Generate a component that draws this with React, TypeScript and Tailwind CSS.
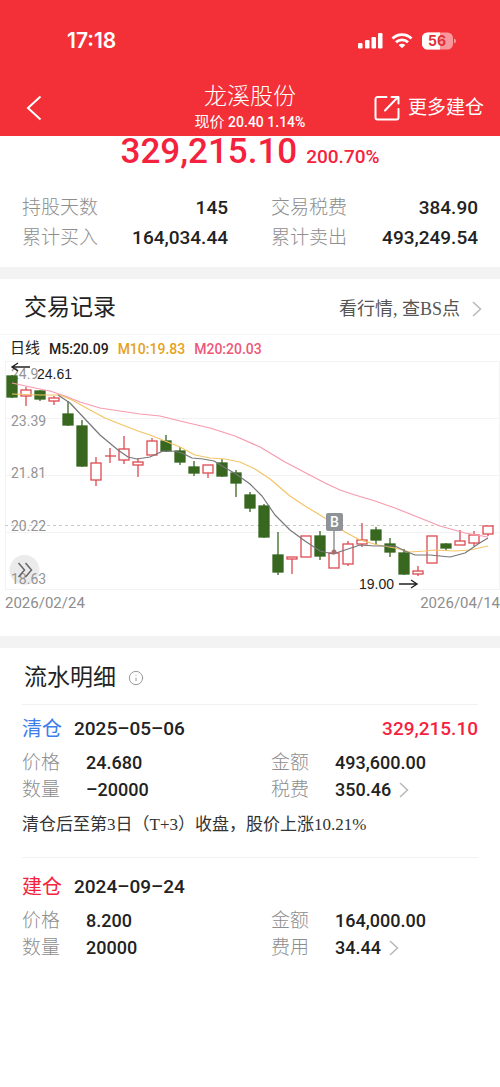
import { Info } from 'lucide-react';

type Candle = {
  high: number;
  top: number;
  bottom: number;
  low: number;
  up?: boolean;
};

// chart space is 500 x 230, one candle every 14 units
const candles: Candle[] = [
  { high: 15, top: 16, bottom: 37, low: 38 },
  { high: 27, top: 30, bottom: 36, low: 46, up: true },
  { high: 30, top: 31, bottom: 39, low: 41 },
  { high: 36, top: 38, bottom: 41, low: 45, up: true },
  { high: 41, top: 54, bottom: 65, low: 66 },
  { high: 60, top: 66, bottom: 106, low: 107 },
  { high: 97, top: 103, bottom: 120, low: 126, up: true },
  { high: 88, top: 96, bottom: 96, low: 103, up: true },
  { high: 76, top: 89, bottom: 100, low: 104, up: true },
  { high: 98, top: 102, bottom: 105, low: 117, up: true },
  { high: 78, top: 81, bottom: 95, low: 95, up: true },
  { high: 75, top: 81, bottom: 91, low: 92 },
  { high: 87, top: 91, bottom: 102, low: 105 },
  { high: 101, top: 107, bottom: 113, low: 116 },
  { high: 105, top: 105, bottom: 113, low: 118, up: true },
  { high: 99, top: 103, bottom: 116, low: 117 },
  { high: 110, top: 113, bottom: 123, low: 137 },
  { high: 132, top: 135, bottom: 148, low: 152 },
  { high: 144, top: 146, bottom: 177, low: 178 },
  { high: 172, top: 195, bottom: 212, low: 215 },
  { high: 197, top: 197, bottom: 199, low: 214, up: true },
  { high: 176, top: 176, bottom: 197, low: 197, up: true },
  { high: 171, top: 176, bottom: 196, low: 200 },
  { high: 193, top: 193, bottom: 208, low: 208, up: true },
  { high: 181, top: 184, bottom: 204, low: 206, up: true },
  { high: 163, top: 180, bottom: 184, low: 187, up: true },
  { high: 167, top: 170, bottom: 180, low: 185 },
  { high: 178, top: 184, bottom: 192, low: 197 },
  { high: 189, top: 193, bottom: 214, low: 215 },
  { high: 206, top: 211, bottom: 214, low: 216, up: true },
  { high: 176, top: 176, bottom: 203, low: 203, up: true },
  { high: 183, top: 184, bottom: 188, low: 191 },
  { high: 170, top: 181, bottom: 185, low: 185, up: true },
  { high: 171, top: 175, bottom: 183, low: 186, up: true },
  { high: 166, top: 166, bottom: 174, low: 176, up: true },
];

const averages = [
  {
    color: '#f79aae',
    points: '12,23 30,27 50,31 65,36 80,42 100,48 120,51 140,54 160,56 180,61 210,68 235,76 260,87 285,102 325,123 340,130 355,135 375,141 395,148 415,156 440,166 465,173 488,177',
  },
  {
    color: '#f3c566',
    points: '12,34 40,35 60,35 72,40 90,50 105,58 120,64 138,71 150,75 165,81 180,87 195,95 210,98 225,99 240,102 255,109 270,119 290,136 305,146 320,155 333,163 345,172 360,180 378,185 395,188 410,192 425,191 435,190 455,191 470,190 488,186',
  },
  {
    color: '#77777a',
    points: '58,35 70,43 85,59 100,75 118,90 128,97 137,99 150,97 163,91 172,91 182,93 192,98 203,99 214,101 222,106 236,114 250,124 262,136 275,155 290,170 305,181 320,191 333,194 345,190 360,185 375,186 395,186 405,191 415,195 430,195 450,197 465,193 478,184 488,178',
  },
];

const axisLabels = [
  { y: 19, text: '24.9' },
  { y: 66, text: '23.39' },
  { y: 118, text: '21.81' },
  { y: 171, text: '20.22' },
  { y: 224, text: '18.63' },
];

const summary = [
  ['持股天数', '145', '交易税费', '384.90'],
  ['累计买入', '164,034.44', '累计卖出', '493,249.54'],
];

function StatusIcons() {
  return (
    <svg viewBox="0 0 98 18" className="h-[18px] w-[98px]" aria-hidden="true">
      <g fill="#fff">
        <rect x="0" y="11" width="4.5" height="5.5" rx="1.2" />
        <rect x="7" y="8" width="4.5" height="8.5" rx="1.2" />
        <rect x="13.5" y="5" width="4.5" height="11.5" rx="1.2" />
        <rect x="20" y="1" width="4.5" height="15.5" rx="1.2" />
        <path d="M44 16.300 40.700 13a4.700 4.700 0 0 1 6.600 0z" />
      </g>
      <g fill="none" stroke="#fff" strokeWidth="2.8">
        <path d="M34.500 6.600a13.500 13.500 0 0 1 19 0" />
        <path d="M38 10.300a8.500 8.500 0 0 1 12 0" />
      </g>
      <rect x="64" y="0.5" width="31" height="17" rx="5.5" fill="#f9989c" />
      <path d="M69.500.500H82v17H69.500a5.500 5.500 0 0 1-5.500-5.500V6a5.500 5.500 0 0 1 5.500-5.500z" fill="#fff" />
      <path d="M96 6.500q2 .800 2 2.500t-2 2.500z" fill="#f9989c" />
      <text x="79" y="14" textAnchor="middle" fontSize="14" fontWeight="700" fontFamily="Inter, sans-serif" fill="#e0303c">56</text>
    </svg>
  );
}

function ShareIcon() {
  return (
    <svg viewBox="0 0 26 26" className="size-[26px]" fill="none" stroke="currentColor" strokeWidth="2" strokeLinecap="round" strokeLinejoin="round" aria-hidden="true">
      <path d="M12.500 2H3.500A2 2 0 0 0 1.500 4v18.500a2 2 0 0 0 2 2h19a2 2 0 0 0 2-2V14" />
      <path d="M11 15.500 24 2M17.500 2H24.500V8.500" />
    </svg>
  );
}

function Arrow() {
  return (
    <svg viewBox="0 0 10 16" className="h-4 w-[10px] text-[#b8b8b8]" fill="none" stroke="currentColor" strokeWidth="1.5" aria-hidden="true">
      <path d="M1 1l7.500 7L1 15" />
    </svg>
  );
}

function CandleChart() {
  return (
    <svg viewBox="0 0 500 230" className="block w-full overflow-visible" role="img" aria-label="日线">
      <g stroke="#f3f3f3">
        {[1, 58, 115, 172, 229].map((y) => (
          <line key={y} x1="5" x2="500" y1={y + 0.5} y2={y + 0.5} />
        ))}
        <line x1="5.5" x2="5.5" y1="1" y2="230" />
        <line x1="499.5" x2="499.5" y1="1" y2="230" />
      </g>
      <line x1="5" x2="494" y1="165.5" y2="165.5" stroke="#c9c9bf" strokeDasharray="3 3" />

      <circle cx="24.5" cy="210" r="15" fill="#ebebeb" />

      <g fontFamily="Roboto, sans-serif" fontSize="14" fill="#949494">
        {axisLabels.map((l) => (
          <text key={l.text} x="11" y={l.y}>{l.text}</text>
        ))}
      </g>

      {candles.map((c, i) => {
        const x = 12 + i * 14;
        const color = c.up ? '#dd4a50' : '#386820';
        return (
          <g key={i} stroke={color} strokeWidth="1.3">
            <path d={`M${x} ${c.high}V${c.top}M${x} ${c.bottom}V${c.low}`} />
            <rect x={x - 5} y={c.top} width="10" height={c.bottom - c.top} fill={c.up ? 'none' : color} />
          </g>
        );
      })}
      <path d="M105 96h11" stroke="#dd4a50" strokeWidth="1.3" />

      {averages.map((a) => (
        <polyline key={a.color} points={a.points} fill="none" stroke={a.color} strokeWidth="1.2" strokeLinejoin="round" />
      ))}

      {/* buy marker */}
      <path d="M334 170v21" stroke="#8f9296" strokeWidth="1.5" />
      <circle cx="334" cy="192" r="2.5" fill="#a5706f" />
      <rect x="326" y="153" width="17" height="18" rx="2" fill="#8f9296" />
      <text x="334.5" y="167" textAnchor="middle" fontFamily="Roboto, sans-serif" fontWeight="500" fontSize="14" fill="#fff">B</text>

      {/* high and low callouts */}
      <g fontFamily="'Liberation Sans', Arial, sans-serif" fontSize="14" fill="#222">
        <text x="37" y="19">24.61</text>
        <text x="359" y="229">19.00</text>
      </g>
      <g fill="none" stroke="#222" strokeWidth="1.4">
        <path d="M30 7H12M18 3l-6 4 6 4" />
        <path d="M399 224h18M411 220l6 4-6 4" />
      </g>
    </svg>
  );
}

type TradeProps = {
  action: string;
  actionClass: string;
  date: string;
  profit?: string;
  price: string;
  quantity: string;
  amount: string;
  feeLabel: string;
  fee: string;
  note?: string;
};

function Trade({ action, actionClass, date, profit, price, quantity, amount, feeLabel, fee, note }: TradeProps) {
  return (
    <article className="mx-[22px] border-t border-[#f1f1f1] pt-2 not-first-of-type:pt-[13px]">
      <div className="flex h-8 items-center text-[19px] font-medium text-[#222]">
        <span className={`w-[52px] text-xl font-normal ${actionClass}`}>{action}</span>
        <span>{date}</span>
        {profit && <span className="ml-auto text-[#f5223d]">{profit}</span>}
      </div>
      <dl className="mt-1 grid grid-cols-[64px_185px_64px_1fr] items-center text-lg leading-[27px] font-medium text-[#222]">
        <dt className="text-[19px] font-light text-[#8e8e8e]">价格</dt>
        <dd>{price}</dd>
        <dt className="text-[19px] font-light text-[#8e8e8e]">金额</dt>
        <dd>{amount}</dd>
        <dt className="text-[19px] font-light text-[#8e8e8e]">数量</dt>
        <dd>{quantity}</dd>
        <dt className="text-[19px] font-light text-[#8e8e8e]">{feeLabel}</dt>
        <dd>
          <button className="flex items-center gap-2">
            {fee}
            <Arrow />
          </button>
        </dd>
      </dl>
      {note && (
        <p className="mt-2 pb-[18px] text-[17px] leading-7 text-[#333] [font-family:'Liberation_Serif','Noto_Sans_CJK_SC',serif]">{note}</p>
      )}
    </article>
  );
}

export default function App() {
  return (
    <div className="min-h-screen bg-white text-[#222] [font-family:Roboto,'Noto_Sans_CJK_SC',sans-serif]">
      <header className="bg-[#f33038] text-white">
        <div className="flex h-20 items-center justify-between pt-px pr-11 pl-[67px]">
          <span className="text-[21px] font-semibold [font-family:Inter,sans-serif]">17:18</span>
          <StatusIcons />
        </div>
        <div className="grid h-14 grid-cols-[1fr_auto_1fr] items-center px-4">
          <button aria-label="返回" className="justify-self-start pl-[10px]">
            <svg viewBox="0 0 16 26" className="h-[26px] w-4" fill="none" stroke="currentColor" strokeWidth="2" aria-hidden="true">
              <path d="M14.500 1.500 2 13l12.500 11.500" />
            </svg>
          </button>
          <div className="text-center">
            <h1 className="text-[23px] leading-7 font-light">龙溪股份</h1>
            <p className="text-sm leading-[22px] font-medium">
              <span className="text-[15px] font-normal">现价</span> 20.40 1.14%
            </p>
          </div>
          <button className="flex items-center gap-2 justify-self-end text-[19px]">
            <ShareIcon />
            更多建仓
          </button>
        </div>
      </header>

      <section className="pb-[14px]">
        <p className="flex h-[57px] items-baseline justify-center gap-[9px] text-[#f5223d]">
          <span className="text-[35px] leading-8 font-medium">329,215.10</span>
          <span className="text-[19px] font-medium">200.70%</span>
        </p>
        <dl className="px-[22px]">
          {summary.map(([label, value, label2, value2]) => (
            <div key={label} className="grid h-[30px] grid-cols-[76px_130px_43px_76px_1fr] items-center">
              <dt className="text-[19px] font-light text-[#8e8e8e]">{label}</dt>
              <dd className="text-right text-[19px] font-medium">{value}</dd>
              <dt className="col-start-4 text-[19px] font-light text-[#8e8e8e]">{label2}</dt>
              <dd className="text-right text-[19px] font-medium">{value2}</dd>
            </div>
          ))}
        </dl>
      </section>

      <section className="border-t-12 border-[#f3f3f3]">
        <div className="flex h-14 items-center justify-between border-b border-[#f6f6f6] pt-1 pr-[18px] pl-6">
          <h2 className="text-[23px]">交易记录</h2>
          <a href="#quotes" className="flex items-center gap-3 text-lg text-[#555] [font-family:'Liberation_Serif','Noto_Sans_CJK_SC',serif]">
            看行情, 查BS点
            <Arrow />
          </a>
        </div>
        <div className="flex h-[25px] items-center gap-[9px] pt-[3px] pl-[10px] text-sm font-medium">
          <span className="text-[15px] font-normal">日线</span>
          <span>M5:20.09</span>
          <span className="text-[#e5a21c]">M10:19.83</span>
          <span className="text-[#ee5877]">M20:20.03</span>
        </div>
        <div className="relative">
          <CandleChart />
          <button aria-label="展开" className="absolute bottom-3 left-[17px] text-[#666]">
            <svg viewBox="0 0 16 16" className="size-4" fill="none" stroke="currentColor" strokeWidth="1.5" aria-hidden="true">
              <path d="M1.500 1 7.500 8l-6 7M8.500 1l6 7-6 7" />
            </svg>
          </button>
        </div>
        <div className="flex h-[46px] justify-between pt-[3px] pl-[5px] text-[15px] leading-5 text-[#8e8e8e]">
          <span>2026/02/24</span>
          <span>2026/04/14</span>
        </div>
      </section>

      <section className="border-t-12 border-[#f3f3f3]">
        <div className="flex h-14 items-center gap-3 pt-1 pl-6">
          <h2 className="text-[23px]">流水明细</h2>
          <button aria-label="说明">
            <Info size={16} strokeWidth={1.5} className="text-[#999]" />
          </button>
        </div>
        <Trade
          action="清仓"
          actionClass="text-[#3d7eeb]"
          date="2025–05–06"
          profit="329,215.10"
          price="24.680"
          quantity="–20000"
          amount="493,600.00"
          feeLabel="税费"
          fee="350.46"
          note="清仓后至第3日（T+3）收盘，股价上涨10.21%"
        />
        <Trade
          action="建仓"
          actionClass="text-[#f5223d]"
          date="2024–09–24"
          price="8.200"
          quantity="20000"
          amount="164,000.00"
          feeLabel="费用"
          fee="34.44"
        />
      </section>
    </div>
  );
}
